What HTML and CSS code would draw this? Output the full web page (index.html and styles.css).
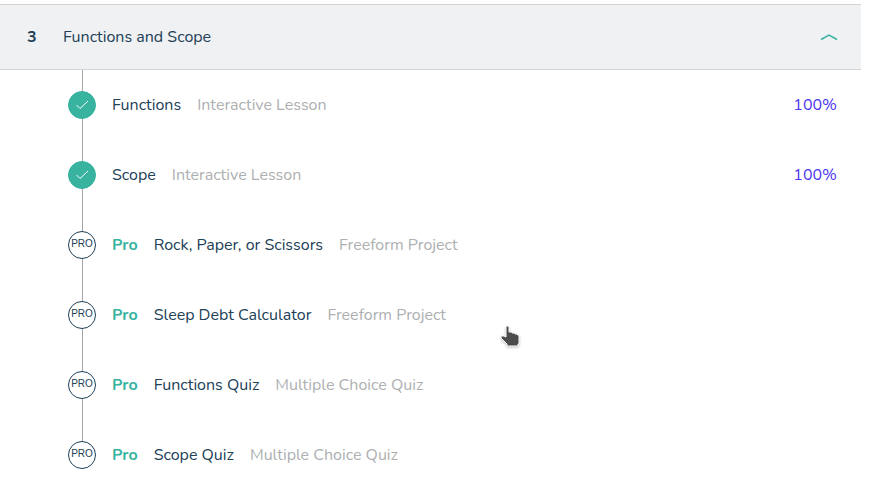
FILE: index.html
```html
<!DOCTYPE html>
<html lang="en">
<head>
<meta charset="utf-8">
<title>Functions and Scope</title>
<link rel="stylesheet" href="styles.css">
</head>
<body>
<main class="module">
  <h2 class="heading">
    <button class="toggle" type="button" aria-expanded="true" aria-controls="lessons">
      <span class="number">3</span>
      <span class="title">Functions and Scope</span>
      <svg class="chevron" width="18" height="8" viewBox="0 0 18 8" aria-hidden="true"><path d="M2 6.500 10 2l8 4.500"/></svg>
    </button>
  </h2>
  <ul class="lessons" id="lessons">
    <li class="lesson">
      <span class="badge done"><svg width="14" height="10" viewBox="0 0 14 10" aria-hidden="true"><path d="M1.500 5 5 8.500 13 1"/></svg></span>
      <a class="name" href="#">Functions</a>
      <span class="kind">Interactive Lesson</span>
      <span class="score">100%</span>
    </li>
    <li class="lesson">
      <span class="badge done"><svg width="14" height="10" viewBox="0 0 14 10" aria-hidden="true"><path d="M1.500 5 5 8.500 13 1"/></svg></span>
      <a class="name" href="#">Scope</a>
      <span class="kind">Interactive Lesson</span>
      <span class="score">100%</span>
    </li>
    <li class="lesson">
      <span class="badge">PRO</span>
      <span class="pro">Pro</span>
      <a class="name" href="#">Rock, Paper, or Scissors</a>
      <span class="kind">Freeform Project</span>
    </li>
    <li class="lesson">
      <span class="badge">PRO</span>
      <span class="pro">Pro</span>
      <a class="name" href="#">Sleep Debt Calculator</a>
      <span class="kind">Freeform Project</span>
    </li>
    <li class="lesson">
      <span class="badge">PRO</span>
      <span class="pro">Pro</span>
      <a class="name" href="#">Functions Quiz</a>
      <span class="kind">Multiple Choice Quiz</span>
    </li>
    <li class="lesson">
      <span class="badge">PRO</span>
      <span class="pro">Pro</span>
      <a class="name" href="#">Scope Quiz</a>
      <span class="kind">Multiple Choice Quiz</span>
    </li>
  </ul>
</main>
<svg class="pointer" width="26" height="28" viewBox="0 0 26 28" aria-hidden="true"><path d="M8 4.500Q8 3 9.500 3T11 4.500V9H14V10H17V11H19.500V12H21V21H20V23H9V21L6 18 3 15V13H6L8 14Z"/></svg>
</body>
</html>
```
FILE: styles.css
```css
* {
  box-sizing: border-box;
}

body {
  margin: 0;
  background: #fff;
  color: #204056;
  font: 16px/24px Nunito, "Noto Sans", sans-serif;
}

.module {
  padding: 4px 8px 0 0;
}

.heading {
  margin: 0;
  font-size: 16px;
  font-weight: 400;
}

.toggle {
  display: flex;
  align-items: center;
  width: 100%;
  padding: 20px 24px 20px 27px;
  border: solid #d3d4d6;
  border-width: 1px 0;
  background: #f0f1f3;
  color: inherit;
  font: inherit;
  text-align: left;
  cursor: pointer;
}

.number {
  width: 36px;
  font-weight: 700;
}

.chevron {
  margin-left: auto;
  overflow: visible;
  fill: none;
  stroke: #37b3a0;
  stroke-width: 1.5;
}

.lessons {
  margin: 0;
  padding: 0;
  list-style: none;
}

.lesson {
  position: relative;
  display: flex;
  align-items: center;
  gap: 16px;
  height: 70px;
  padding: 0 24px 0 68px;
}

.lesson::before {
  content: "";
  position: absolute;
  top: 0;
  bottom: 0;
  left: 82px;
  width: 1px;
  background: #a2a5a9;
}

.lesson:last-child::before {
  bottom: 50%;
}

.badge {
  position: relative;
  display: flex;
  align-items: center;
  justify-content: center;
  flex: none;
  width: 28px;
  height: 28px;
  padding-bottom: 2px;
  border: 1px solid #204056;
  border-radius: 50%;
  background: #fff;
  font: 10px/12px "Liberation Sans", sans-serif;
}

.done {
  padding: 0;
  border-color: #37b3a0;
  background: #37b3a0;
}

.done svg {
  fill: none;
  stroke: #fff;
  stroke-width: 1;
}

.name {
  color: inherit;
  text-decoration: none;
}

.pro {
  color: #37b3a0;
  font-weight: 700;
}

.kind {
  color: #adafb1;
}

.score {
  margin-left: auto;
  color: #4b35ef;
}

.pointer {
  position: absolute;
  top: 323px;
  left: 498px;
  fill: #4b4b4b;
  stroke: #fff;
  stroke-width: 1;
  filter: drop-shadow(0 1px 1px #0004);
}
```
